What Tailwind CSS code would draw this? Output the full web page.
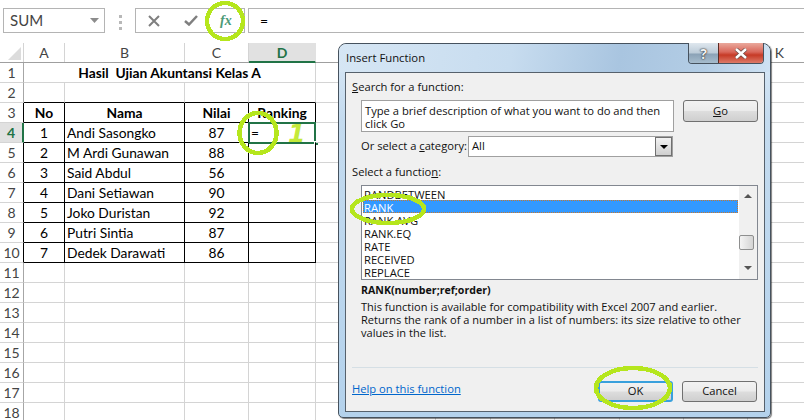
<!DOCTYPE html>
<html>

<head>
    <title>Insert Function</title>
    <script src="https://cdn.jsdelivr.net/npm/@tailwindcss/browser@4"></script>
</head>

<body class="bg-white overflow-hidden">
    <div class="relative w-[804px] h-[420px] overflow-hidden font-['Lato',sans-serif]">

        <!-- Formula bar -->
        <div class="h-[43px] pt-2 flex items-start relative">
            <div class="ml-[3px] w-[102px] h-[25px] border border-[#b4b4b4] flex items-center justify-between pl-[6px] pr-[5px] text-[15px] text-[#444]">
                <span>SUM</span>
                <svg width="9" height="5" viewBox="0 0 9 5"><path d="M0 0h9L4.5 5z" fill="#8c8c8c" /></svg>
            </div>
            <div class="ml-[14px] mt-[7px] w-[3px] flex flex-col gap-[3px]">
                <div class="h-[3px] bg-[#b8b8b8]"></div>
                <div class="h-[3px] bg-[#b8b8b8]"></div>
                <div class="h-[3px] bg-[#b8b8b8]"></div>
            </div>
            <div class="ml-[13px] w-[110px] h-[25px] border border-[#b4b4b4] flex items-center pl-3">
                <svg width="12" height="12" viewBox="0 0 12 12"><path d="M1 1l10 10M11 1L1 11" stroke="#7f7f7f" stroke-width="2" fill="none" /></svg>
                <svg class="ml-6" width="14" height="11" viewBox="0 0 14 11"><path d="M1 6l4 3.500L13 1" stroke="#7f7f7f" stroke-width="2.500" fill="none" /></svg>
                <span class="ml-[22px] font-['Liberation_Serif',serif] italic font-bold text-[14px] text-[#4c9a78]">fx</span>
            </div>
            <div class="ml-[3px] flex-1 h-[25px] border border-r-0 border-[#b4b4b4] flex items-center pl-[11px] text-[14px] text-black">=</div>
        </div>

        <!-- Worksheet -->
        <div id="sheet"></div>

        <!-- Insert Function dialog -->
        <div class="absolute left-[338px] top-[43px] w-[433px] h-[375px] border border-[#46525e] rounded-t-[8px] rounded-b-[5px] bg-[linear-gradient(180deg,#dbe9f6_0%,#c4dbef_20%,#b4d2ec_100%)] font-['Open_Sans',sans-serif] text-[11.2px] text-[#111] shadow-[1px_1px_1px_rgba(0,0,0,0.5)]">
            <div class="h-[28px] relative rounded-t-[8px] bg-[linear-gradient(100deg,#d6e6f4_0%,#c7dcef_40%,#a9c5e0_65%,#b3cde5_85%,#cfe2f3_100%)]">
                <span class="absolute left-[7px] top-[6px] text-[11.300px] leading-[16px] text-[#111]">Insert Function</span>
                <div class="absolute left-[349px] top-[-1px] h-[21px] flex border border-[#46525e] border-t-0 rounded-b-[4px] overflow-hidden">
                    <div class="w-[29px] bg-[linear-gradient(180deg,#dfe7ee_0%,#bccbd8_50%,#8ba2b6_55%,#a6bccd_100%)] flex items-center justify-center font-bold text-[14px] text-[#f2f2f2] [text-shadow:0_0_2px_#222,0_0_1px_#222]">?</div>
                    <div class="w-[45px] border-l border-[#5c2a22] bg-[linear-gradient(180deg,#eaa99d_0%,#d9675a_45%,#c63a26_60%,#dd7a68_100%)] flex items-center justify-center">
                        <svg width="14" height="11" viewBox="0 0 14 11">
                            <path d="M2 1l10 9M12 1L2 10" stroke="#6b4a44" stroke-width="4" fill="none" />
                            <path d="M2 1l10 9M12 1L2 10" stroke="#fff" stroke-width="2.500" fill="none" />
                        </svg>
                    </div>
                </div>
            </div>

            <div class="ml-[6px] w-[420px] h-[340px] border border-[#56616c] bg-[#f0f0f0] pl-[6px] pt-[6px]">
                <div class="h-4 leading-4"><span class="underline">S</span>earch for a function:</div>

                <div class="mt-[5px] ml-[9px] flex items-start">
                    <div class="w-[313px] h-[32px] border border-[#a0a0a0] bg-white px-[3px] pt-[3px] leading-[13px]">Type a brief description of what you want to do and then<br>click Go</div>
                    <button class="ml-[9px] w-[75px] h-[22px] border border-[#707070] rounded-[3px] bg-[linear-gradient(180deg,#f2f2f2_0%,#ebebeb_48%,#dddddd_52%,#cfcfcf_100%)]"><span class="underline">G</span>o</button>
                </div>

                <div class="mt-[4px] ml-[9px] flex items-center h-[21px]">
                    <div class="w-[107px] whitespace-nowrap">Or select a <span class="underline">c</span>ategory:</div>
                    <div class="w-[205px] h-[21px] border border-[#a0a0a0] bg-white flex items-center justify-between pl-[3px]">
                        <span>All</span>
                        <div class="w-[17px] h-[19px] border border-[#707070] bg-[linear-gradient(180deg,#f2f2f2,#cfcfcf)] flex items-center justify-center">
                            <svg width="8" height="4" viewBox="0 0 8 4"><path d="M0 0h8L4 4z" fill="#000" /></svg>
                        </div>
                    </div>
                </div>

                <div class="mt-[7px] h-4 leading-4">Select a functio<span class="underline">n</span>:</div>

                <div class="mt-[5px] ml-[9px] w-[397px] h-[95px] border border-[#828790] bg-white flex overflow-hidden">
                    <div class="flex-1 min-w-0 pl-px pr-px">
                        <div class="h-[13px] mt-[1px] leading-[15px] pl-[1px]">RANDBETWEEN</div>
                        <div class="h-[13px] leading-[13px] border border-dotted border-[#c9782c] bg-[#3399ff] text-white">RANK</div>
                        <div class="h-[13px] leading-[15px] pl-[1px]">RANK.AVG</div>
                        <div class="h-[13px] leading-[15px] pl-[1px]">RANK.EQ</div>
                        <div class="h-[13px] leading-[15px] pl-[1px]">RATE</div>
                        <div class="h-[13px] leading-[15px] pl-[1px]">RECEIVED</div>
                        <div class="h-[13px] leading-[15px] pl-[1px]">REPLACE</div>
                    </div>
                    <div class="w-[18px] bg-[#f0f0f0] flex flex-col items-center pt-[8px] relative">
                        <svg width="8" height="4" viewBox="0 0 8 4"><path d="M4 0l4 4H0z" fill="#555" /></svg>
                        <div class="mt-[37px] mr-[3px] w-[15px] h-[15px] border border-[#8e8f8f] rounded-[2px] bg-[linear-gradient(90deg,#f4f4f4,#d4d4d4)]"></div>
                        <svg class="mt-[16px]" width="8" height="4" viewBox="0 0 8 4"><path d="M0 0h8L4 4z" fill="#555" /></svg>
                    </div>
                </div>

                <div class="mt-[2px] ml-[9px] h-4 leading-4 font-bold text-[10.600px]">RANK(number;ref;order)</div>
                <div class="mt-[2px] ml-[9px] w-[400px] h-[39px] text-[11.050px] leading-[13px]">This function is available for compatibility with Excel 2007 and earlier.<br>Returns the rank of a number in a list of numbers: its size relative to other<br>values in the list.</div>

                <div class="mt-[28px] w-[406px] h-px bg-[#d5dfe5]"></div>

                <div class="mt-[13px] flex items-center">
                    <a class="w-[246px] -mt-[4px] underline text-[#0066cc]" href="#">Help on this function</a>
                    <button class="w-[75px] h-[21px] border-2 border-[#39a0dc] rounded-[3px] bg-[linear-gradient(180deg,#f2f2f2_0%,#ebebeb_48%,#dddddd_52%,#cfcfcf_100%)]">OK</button>
                    <button class="ml-[9px] w-[75px] h-[21px] border border-[#707070] rounded-[3px] bg-[linear-gradient(180deg,#f2f2f2_0%,#ebebeb_48%,#dddddd_52%,#cfcfcf_100%)]">Cancel</button>
                </div>
            </div>
        </div>

        <!-- Hand drawn marks on top of the screenshot -->
        <svg class="absolute left-0 top-0 pointer-events-none" width="804" height="420" viewBox="0 0 804 420" fill="none" stroke="#b5e61d" stroke-width="4.500" shape-rendering="crispEdges">
            <ellipse cx="225" cy="21" rx="18" ry="18" />
            <ellipse cx="258" cy="133" rx="18.500" ry="20" />
            <ellipse cx="388" cy="209" rx="36" ry="14" />
            <ellipse cx="633" cy="388" rx="37" ry="20" />
        </svg>
        <span class="absolute left-[288px] top-[120px] font-['DejaVu_Sans',sans-serif] italic font-bold text-[25px] leading-[28px] text-[#c4ea3a]">1</span>
    </div>

    <script type="text/javascript">
        const cols = [
            "w-[41px]", "w-[120px]", "w-[64px]", "w-[67px]", "w-[120px]",
            "w-[55px]", "w-[64px]", "w-[65px]", "w-[64px]", "w-[64px]", "w-[64px]"
        ];
        const letters = ["A", "B", "C", "D", "E", "F", "G", "H", "I", "J", "K"];
        const table = {
            3: ["No", "Nama", "Nilai", "Ranking"],
            4: ["1", "Andi Sasongko", "87", "="],
            5: ["2", "M Ardi Gunawan", "88", ""],
            6: ["3", "Said Abdul", "56", ""],
            7: ["4", "Dani Setiawan", "90", ""],
            8: ["5", "Joko Duristan", "92", ""],
            9: ["6", "Putri Sintia", "87", ""],
            10: ["7", "Dedek Darawati", "86", ""]
        };

        const sheet = document.getElementById("sheet");
        let html = `<div class="flex h-[20px] border-b border-[#9f9f9f]">
            <div class="w-[24px] shrink-0 h-[19px] relative border-r border-[#d4d4d4]"><svg class="absolute left-[8px] top-[4px]" width="13" height="13" viewBox="0 0 13 13"><path d="M13 0v13H0z" fill="#dcdcdc" /></svg></div>`;
        letters.forEach((l, i) => {
            const active = l === "D";
            html += `<div class="${cols[i]} shrink-0 text-center text-[14px] leading-[19px] border-r ${active
                ? "bg-[#e1e1e1] border-[#e1e1e1] text-[#217346] font-bold border-b-2 border-b-[#217346] h-[20px]"
                : "h-[19px] border-[#d4d4d4] text-[#444]"}">${l}</div>`;
        });
        html += "</div>";

        for (let r = 1; r <= 18; r++) {
            const inTable = r >= 3 && r <= 10;
            const head = r === 4
                ? "bg-[#e1e1e1] text-[#217346] font-bold border-r-2 border-r-[#217346] border-b-[#d4d4d4]"
                : (inTable ? "border-r-black text-[#444] border-b-[#d4d4d4]" : "border-r-[#a6a6a6] text-[#444] border-b-[#d4d4d4]");
            html += `<div class="flex h-[20px]"><div class="w-[24px] shrink-0 text-center text-[14px] leading-[19px] border-r border-b ${head}">${r}</div>`;

            if (r === 1) {
                html += `<div class="w-[292px] shrink-0 border-r border-b border-[#d4d4d4] text-center font-bold text-[13.800px] leading-[20px] text-black">Hasil&nbsp; Ujian Akuntansi Kelas A</div>`;
            }
            cols.forEach((w, i) => {
                if (r === 1 && i < 4) return;
                const black = i < 4 && (inTable || r === 2);
                const sideBorder = i < 4 && inTable ? "border-r-black" : "border-r-[#d4d4d4]";
                const bottomBorder = black ? "border-b-black" : "border-b-[#d4d4d4]";
                const cell = (table[r] && i < 4) ? table[r][i] : "";
                const align = (i === 1 && r > 3) || (i === 3 && r === 4) ? "pl-[2px] text-left" : "text-center";
                const weight = r === 3 ? "font-bold" : "";
                const selected = r === 4 && i === 3;
                html += `<div class="${w} shrink-0 relative border-r border-b ${sideBorder} ${bottomBorder} ${align} ${weight} text-[13.800px] leading-[20px] text-black whitespace-nowrap">${cell}${selected
                    ? `<div class="absolute left-[-1px] top-[-1px] w-[68px] h-[22px] border-2 border-[#217346]"></div><div class="absolute left-[65px] top-[18px] w-[5px] h-[5px] bg-[#217346] border border-white"></div>`
                    : ""}</div>`;
            });
            html += "</div>";
        }
        sheet.innerHTML = html;
    </script>
</body>

</html>
